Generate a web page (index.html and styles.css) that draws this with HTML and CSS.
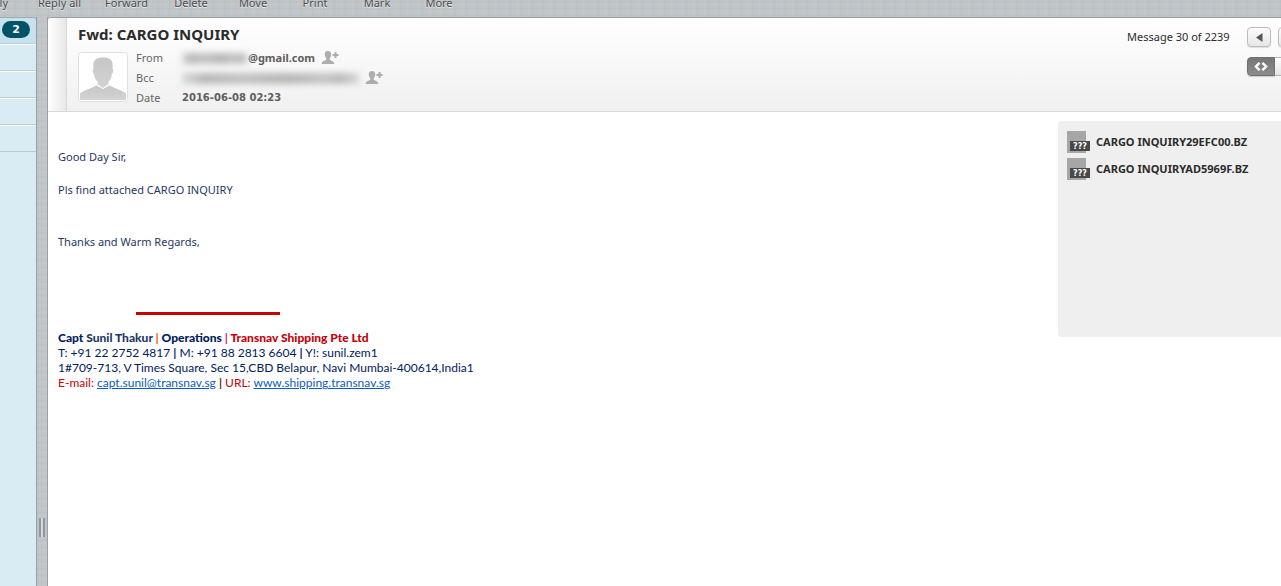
FILE: index.html
```html
<!DOCTYPE html>
<html lang="en">
<head>
<meta charset="utf-8">
<title>Fwd: CARGO INQUIRY</title>
<link rel="stylesheet" href="styles.css">
</head>
<body>
<svg class="defs" width="0" height="0" aria-hidden="true">
  <defs>
    <linearGradient id="fade" x1="0" y1="0" x2="0" y2="1"><stop offset="0" stop-color="#c6c6c6"/><stop offset="1" stop-color="#d3d3d3"/></linearGradient>
    <symbol id="add-contact" viewBox="0 0 18 14">
      <path fill="#adadad" d="M7 0c2.300 0 3.400 1.500 3.200 3.600-.1 1.600-.7 2.900-1.500 3.800v1.300c.6.900 4.500 1 4.700 4.300H.6c.2-3.300 4.100-3.400 4.700-4.300V7.400C4.500 6.500 3.900 5.200 3.800 3.600 3.600 1.500 4.700 0 7 0z"/>
      <path fill="#adadad" d="M13.500 1h2v2h2v2h-2v2h-2V5h-2V3h2z"/>
    </symbol>
  </defs>
</svg>
<nav class="toolbar">
  <button class="tool tool-cut">Reply</button>
  <button class="tool tool-wide">Reply all</button>
  <button class="tool tool-wide">Forward</button>
  <button class="tool">Delete</button>
  <button class="tool">Move</button>
  <button class="tool">Print</button>
  <button class="tool">Mark</button>
  <button class="tool">More</button>
</nav>
<div class="workspace">
  <ul class="folders">
    <li class="folder selected"><span class="count">2</span></li>
    <li class="folder"></li>
    <li class="folder"></li>
    <li class="folder"></li>
    <li class="folder"></li>
  </ul>
  <div class="splitter"><span class="grip"></span></div>
  <main class="message">
    <header class="message-header">
      <div class="header-edge"></div>
      <div class="header-main">
        <h1 class="subject">Fwd: CARGO INQUIRY</h1>
        <div class="sender">
          <svg class="photo" viewBox="0 0 50 50" role="img" aria-label="Contact photo">
            <rect x=".5" y=".5" width="49" height="49" rx="3" fill="#fff" stroke="#e0e0e0"/>
            <path fill="url(#fade)" d="M25 5.500c6 0 10 2 9.700 8.500l-.2 3c1.200.5.9 3.600-.6 5.200-.5 3.400-1.800 6-3.600 7.800v2.500L25 36l-5.300-3.500V30c-1.900-1.800-3.200-4.400-3.700-7.800-1.400-1.600-1.700-4.700-.5-5.200l-.2-3c-.3-6.500 3.700-8.500 9.700-8.500z"/>
            <path fill="url(#fade)" d="M2 48v-6.500c2-2.300 9.500-4.500 16.500-8L25 37l6.500-3.500c7 3.500 14.500 5.700 16.500 8V48z"/>
          </svg>
          <dl class="details">
            <dt>From</dt>
            <dd><span class="redacted redacted-short"></span>@gmail.com<button class="add" aria-label="Add contact"><svg class="add-icon"><use href="#add-contact"/></svg></button></dd>
            <dt>Bcc</dt>
            <dd><span class="redacted redacted-long"></span><button class="add" aria-label="Add contact"><svg class="add-icon"><use href="#add-contact"/></svg></button></dd>
            <dt>Date</dt>
            <dd class="date">2016-06-08 02:23</dd>
          </dl>
        </div>
      </div>
      <div class="header-nav">
        <div class="pager">
          <span class="position">Message 30 of 2239</span>
          <button class="page" aria-label="Previous message"><svg width="7" height="9" viewBox="0 0 7 9"><path fill="#555" d="M0 4.500L6.500 0v9z"/></svg></button>
          <button class="page" aria-label="Next message"></button>
        </div>
        <div class="view">
          <button class="mode mode-on" aria-label="HTML view"><svg width="14" height="9" viewBox="0 0 14 9"><path fill="none" stroke="#fff" stroke-width="2.400" d="M5.600.8L1.900 4.500l3.700 3.700M8.400.8l3.700 3.700-3.700 3.700"/></svg></button><button class="mode" aria-label="Text view"></button>
        </div>
      </div>
    </header>
    <div class="message-content">
      <article class="letter">
        <p class="greeting">Good Day Sir,</p>
        <p class="body-line">Pls find attached CARGO INQUIRY</p>
        <p class="closing">Thanks and Warm Regards,</p>
        <hr class="rule">
        <address class="signature">
          <strong class="signer">Capt <span class="soft">Sunil Thakur</span> <span class="bar-warm">|</span> Operations <span class="bar-pink">|</span> <span class="red">Transnav Shipping Pte Ltd</span></strong>
          <span>T: +91 22 2752 4817 <b>|</b> M: +91 88 2813 6604 <b>|</b> Y!: sunil.zem1</span>
          <span>1#709-713, V Times Square, Sec 15,CBD Belapur, Navi Mumbai-400614,India1</span>
          <span><span class="red">E-mail:</span> <a href="#">capt.sunil@transnav.sg</a> <b class="maroon">|</b> <span class="red">URL:</span> <a href="#">www.shipping.transnav.sg</a></span>
        </address>
      </article>
      <ul class="attachments">
        <li><svg class="file" viewBox="0 0 23 22" aria-hidden="true"><path fill="#a6a6a6" d="M0 0h19v22H0z"/><path fill="#484848" d="M3 10h20v10H3z"/><text class="file-type" x="13" y="18" text-anchor="middle">???</text></svg><a href="#">CARGO INQUIRY29EFC00.BZ</a></li>
        <li><svg class="file" viewBox="0 0 23 22" aria-hidden="true"><path fill="#a6a6a6" d="M0 0h19v22H0z"/><path fill="#484848" d="M3 10h20v10H3z"/><text class="file-type" x="13" y="18" text-anchor="middle">???</text></svg><a href="#">CARGO INQUIRYAD5969F.BZ</a></li>
      </ul>
    </div>
  </main>
</div>
</body>
</html>
```
FILE: styles.css
```css
* { box-sizing: border-box; }
html, body { height: 100%; }
body {
  margin: 0;
  display: flex;
  flex-direction: column;
  overflow: hidden;
  font: 11px/20px "Noto Sans", "Open Sans", sans-serif;
  color: #2b2b2b;
  background-color: #c0c5c8;
  background-image:
    repeating-linear-gradient(90deg, rgba(255,255,255,.06) 0 1px, transparent 1px 4px, rgba(110,125,135,.06) 4px 5px, transparent 5px 11px),
    repeating-linear-gradient(0deg, rgba(255,255,255,.05) 0 1px, transparent 1px 3px, rgba(110,125,135,.05) 3px 4px, transparent 4px 7px);
}
.defs { position: absolute; }
button { font: inherit; color: inherit; padding: 0; border: 0; background: none; }
ul, dl, dd, p, h1 { margin: 0; padding: 0; }
ul { list-style: none; }

.toolbar { display: flex; align-items: flex-end; height: 17px; flex-shrink: 0; overflow: hidden; }
.tool { width: 62px; flex-shrink: 0; line-height: 14px; padding-bottom: 7px; color: #4c4c4c; text-shadow: 0 1px 1px #eee; }
.tool-wide { width: 67px; }
.tool-cut { width: 26px; direction: rtl; padding-right: 18px; white-space: nowrap; }

.workspace { display: flex; flex: 1; min-height: 0; }
.folders { width: 36px; flex-shrink: 0; background: #d9ebf3; border-top: 1px solid #a3a8ab; border-top-right-radius: 4px; }
.folder { height: 27px; border-top: 1px solid #fff; border-bottom: 1px solid #b9ced9; }
.folder.selected { height: 26px; background: #c7e1ee; border-top: 0; border-top-right-radius: 4px; padding: 3px 0 0 2px; }
.count { display: block; width: 28px; height: 17px; border-radius: 9px; background: #005366; color: #fff; font: bold 11px/17px "DejaVu Sans", sans-serif; text-align: center; }
.splitter { width: 12px; flex-shrink: 0; display: flex; align-items: flex-end; justify-content: center; padding-bottom: 49px; border-left: 1px solid #9b9fa2; border-right: 1px solid #9b9fa2; }
.grip { width: 6px; height: 19px; border-left: 2px solid #8d989e; border-right: 2px solid #8d989e; background: #d3d8da; }

.message { flex: 1; min-width: 0; background: #fff; border-top: 1px solid #999da0; border-top-left-radius: 4px; overflow: hidden; }
.message-header { display: flex; background: linear-gradient(#fff, #f0f0f0); border-bottom: 1px solid #d8d8d8; }
.header-edge { width: 19px; flex-shrink: 0; border-right: 1px solid #d8d8d8; background: linear-gradient(90deg, #fff, #e8e8e8); }
.header-main { flex: 1; min-width: 0; padding: 6px 0 3px 11px; }
.subject { font-size: 15px; line-height: 21px; font-weight: bold; color: #2b2b2b; }
.sender { display: flex; gap: 8px; padding-top: 3px; }
.photo { width: 50px; height: 50px; margin-top: 4px; flex-shrink: 0; }
.details { display: grid; grid-template-columns: 38px 1fr; column-gap: 8px; grid-auto-rows: 20px; color: #666; }
.details dd { display: flex; align-items: center; font-weight: bold; color: #5e5e5e; }
.details .date { font-family: "DejaVu Sans", sans-serif; font-size: 10px; }
.redacted { height: 11px; filter: blur(3px); background: linear-gradient(90deg, #dadada, #b9b9b9 12%, #c2c2c2 35%, #b6b6b6 60%, #c4c4c4 80%, #bbb 90%, #d8d8d8); }
.redacted-short { width: 66px; }
.redacted-long { width: 177px; }
.add { margin-left: 6px; height: 14px; display: flex; }
.add-icon { width: 18px; height: 14px; }

.header-nav { width: 154px; flex-shrink: 0; overflow: hidden; padding-top: 9px; }
.pager { display: flex; align-items: center; }
.position { width: 120px; flex-shrink: 0; }
.page { width: 24px; height: 20px; flex-shrink: 0; margin-right: 7px; display: flex; align-items: center; justify-content: center; border: 1px solid #bcbcbc; border-radius: 4px; background: linear-gradient(#fdfdfd, #e6e6e6); box-shadow: 0 1px 1px #ddd; }
.view { display: flex; padding: 10px 0 3px 120px; }
.mode { width: 28px; height: 19px; flex-shrink: 0; display: flex; align-items: center; justify-content: center; border: 1px solid #b5b5b5; border-left: 0; background: linear-gradient(#fdfdfd, #e6e6e6); }
.mode-on { border: 1px solid #707070; border-radius: 4px 0 0 4px; background: linear-gradient(#777, #8c8c8c); box-shadow: 0 1px 1px #ccc; }

.message-content { display: flex; align-items: flex-start; padding: 9px 0 0 10px; }
.letter { flex: 1; min-width: 0; padding-top: 26px; color: #1f3864; }
.body-line { margin-top: 13px; }
.closing { margin-top: 32px; }
.rule { width: 144px; height: 3px; margin: 60px 0 15px 78px; border: 0; background: #c80000; }
.signature { display: flex; flex-direction: column; font: 12px/15px Lato, "Open Sans", sans-serif; color: #002060; }
.signer { font-weight: 900; }
.soft { color: #1f3864; }
.bar-warm { color: #e36c0a; }
.bar-pink { color: #d0307a; }
.red { color: #c8000a; }
.maroon { color: #7a1010; }
.signature a { color: #0b5cc0; }

.attachments { width: 223px; min-height: 216px; flex-shrink: 0; padding: 7px 0 0 9px; background: #efefef; border-radius: 4px 0 0 4px; }
.attachments li { display: flex; align-items: center; gap: 6px; height: 27px; white-space: nowrap; }
.attachments a { color: #2b2b2b; font-weight: bold; text-decoration: none; }
.file { width: 23px; height: 22px; }
.file-type { font: bold 8px "DejaVu Sans", sans-serif; fill: #fff; }
```
